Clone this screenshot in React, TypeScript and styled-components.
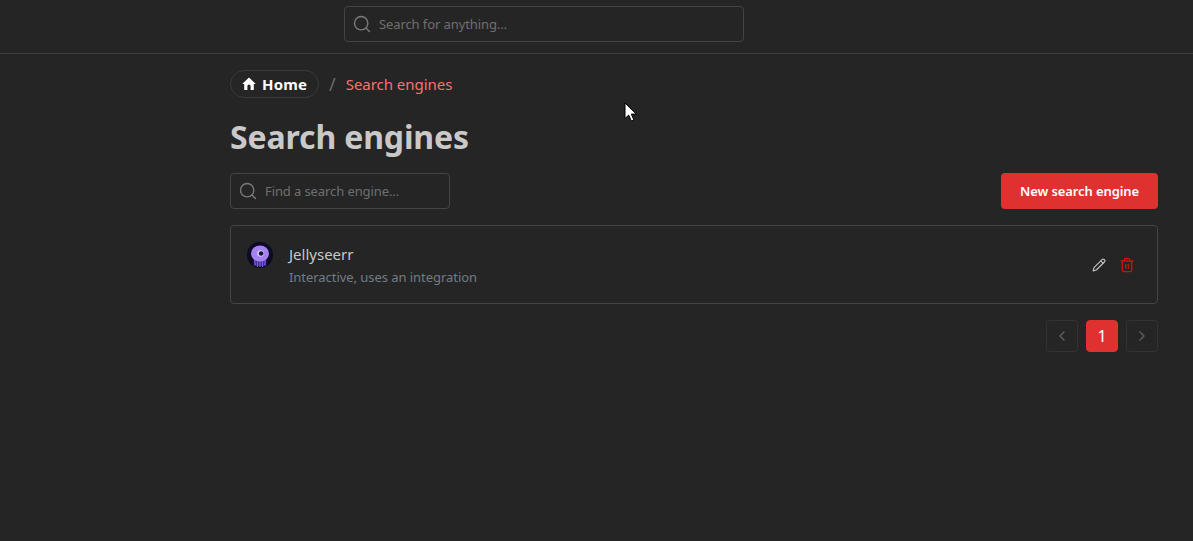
import React from "react";
import styled, { createGlobalStyle } from "styled-components";
import { Search, Pencil, Trash2, ChevronLeft, ChevronRight } from "lucide-react";

const Global = createGlobalStyle`
  html, body { margin: 0; padding: 0; background: #252525; height: 100%; overflow: hidden; }
  body { font-family: "Noto Sans", "Open Sans", sans-serif; }
  #root { height: 100%; }
`;

const Page = styled.div`
  position: relative;
  width: 100%;
  height: 541px;
  background: #252525;
`;

const TopBar = styled.header`
  box-sizing: border-box;
  height: 54px;
  border-bottom: 1px solid #3f3f3f;
  padding: 6px 0 0 344px;
  display: flex;
  align-items: flex-start;
`;

const SearchBox = styled.label<{ $w: number }>`
  box-sizing: border-box;
  width: ${(p) => p.$w}px;
  height: 36px;
  border: 1px solid #444444;
  border-radius: 4px;
  display: flex;
  align-items: center;
  padding-left: 8px;
  gap: 6px;
  color: #6f6f6f;
  font-size: 13px;
  letter-spacing: -0.1px;
`;

const SearchIcon = styled(Search)`
  width: 20px;
  height: 20px;
  color: #7a7a7a;
  stroke-width: 1.7;
  flex: none;
  transform: translateX(-1px);
`;

const Main = styled.main`
  padding: 16px 35px 0 230px;
`;

const Crumbs = styled.nav`
  display: flex;
  align-items: center;
  height: 28px;
`;

const HomeCrumb = styled.a`
  box-sizing: border-box;
  height: 28px;
  width: 89px;
  border: 1px solid #3a3a3a;
  border-radius: 14px;
  display: flex;
  align-items: center;
  padding-left: 10px;
  gap: 5px;
  color: #ffffff;
  font-weight: 700;
  font-size: 15px;
  letter-spacing: 0.2px;
`;

const Slash = styled.span`
  margin: 0 10px;
  color: #6a6a6a;
  font-size: 18px;
`;

const CurrentCrumb = styled.span`
  color: #ff6f6f;
  font-size: 15px;
  letter-spacing: -0.03px;
`;

const Title = styled.h1`
  margin: 15px 0 0;
  height: 48px;
  line-height: 48px;
  font-size: 32px;
  font-weight: 700;
  letter-spacing: -0.14px;
  color: #c9c9c9;
`;

const Toolbar = styled.div`
  margin-top: 12px;
  display: flex;
  justify-content: space-between;
  align-items: center;
`;

const PrimaryButton = styled.button`
  height: 36px;
  width: 157px;
  border: 0;
  padding: 0;
  border-radius: 4px;
  background: #e03131;
  color: #ffffff;
  font-family: inherit;
  font-weight: 600;
  font-size: 13px;
  letter-spacing: -0.1px;
`;

const Card = styled.section`
  box-sizing: border-box;
  margin-top: 16px;
  height: 79px;
  border: 1px solid #444444;
  border-radius: 4px;
  display: flex;
  align-items: center;
  padding: 0 22px 0 16px;
`;

const Logo = styled.svg`
  width: 26px;
  height: 26px;
  flex: none;
  align-self: flex-start;
  margin-top: 16px;
`;

const Info = styled.div`
  margin-left: 16px;
  flex: 1;
`;

const Name = styled.div`
  color: #c9c9c9;
  font-size: 15px;
  line-height: 22px;
`;

const Desc = styled.div`
  color: #727c87;
  font-size: 13px;
  line-height: 20px;
  margin-top: 2px;
  letter-spacing: -0.05px;
`;

const Actions = styled.div`
  display: flex;
  gap: 13px;
  align-items: center;
`;

const EditIcon = styled(Pencil)`
  width: 14px;
  height: 14px;
  color: #bdbdbd;
`;

const DeleteIcon = styled(Trash2)`
  width: 16px;
  height: 16px;
  color: #d00f0f;
`;

const Pager = styled.div`
  margin-top: 16px;
  display: flex;
  justify-content: flex-end;
  gap: 8px;
`;

const PageButton = styled.div<{ $active?: boolean }>`
  box-sizing: border-box;
  width: 32px;
  height: 32px;
  border-radius: 4px;
  display: flex;
  align-items: center;
  justify-content: center;
  font-size: 16px;
  color: ${(p) => (p.$active ? "#ffffff" : "#5f5f5f")};
  background: ${(p) => (p.$active ? "#e03131" : "transparent")};
  border: 1px solid ${(p) => (p.$active ? "#e03131" : "#333333")};
`;

const Cursor = styled.svg`
  position: absolute;
  left: 624px;
  top: 102px;
  width: 13px;
  height: 21px;
`;

export default function App() {
  return (
    <Page>
      <Global />
      <TopBar>
        <SearchBox $w={400}>
          <SearchIcon />
          <span>Search for anything...</span>
        </SearchBox>
      </TopBar>
      <Main>
        <Crumbs>
          <HomeCrumb>
            <svg width="16" height="16" viewBox="0 0 16 16" fill="#fff">
              <path d="M8 1.6 1.2 8h2v6h3.2v-4a1.6 1.6 0 0 1 3.2 0v4h3.2V8h2z" />
            </svg>
            Home
          </HomeCrumb>
          <Slash>/</Slash>
          <CurrentCrumb>Search engines</CurrentCrumb>
        </Crumbs>
        <Title>Search engines</Title>
        <Toolbar>
          <SearchBox $w={220}>
            <SearchIcon />
            <span>Find a search engine...</span>
          </SearchBox>
          <PrimaryButton>New search engine</PrimaryButton>
        </Toolbar>
        <Card>
          <Logo viewBox="0 0 26 26">
            <circle cx="13" cy="13" r="13" fill="#0c0a24" />
            <path d="M6.5 17h13l-.5 7H7z" fill="#3f2d8f" />
            <path d="M8 17v6M10.5 17v8M13 17v8M15.5 17v8M18 17v6" stroke="#7c5ce0" strokeWidth="1.1" />
            <ellipse cx="13" cy="11.5" rx="9" ry="8" fill="#a582f0" />
            <circle cx="13.5" cy="11.5" r="3.3" fill="#d3ccf6" />
            <circle cx="14.1" cy="11.5" r="2.3" fill="#15133a" />
          </Logo>
          <Info>
            <Name>Jellyseerr</Name>
            <Desc>Interactive, uses an integration</Desc>
          </Info>
          <Actions>
            <EditIcon />
            <DeleteIcon />
          </Actions>
        </Card>
        <Pager>
          <PageButton>
            <ChevronLeft size={16} />
          </PageButton>
          <PageButton $active>1</PageButton>
          <PageButton>
            <ChevronRight size={16} />
          </PageButton>
        </Pager>
      </Main>
      <Cursor viewBox="0 0 13 21">
        <path d="M1 1v15.5l3.7-3.4 2.6 6 2.6-1.1-2.6-5.9h5z" fill="#fff" stroke="#000" strokeWidth="1" />
      </Cursor>
    </Page>
  );
}
